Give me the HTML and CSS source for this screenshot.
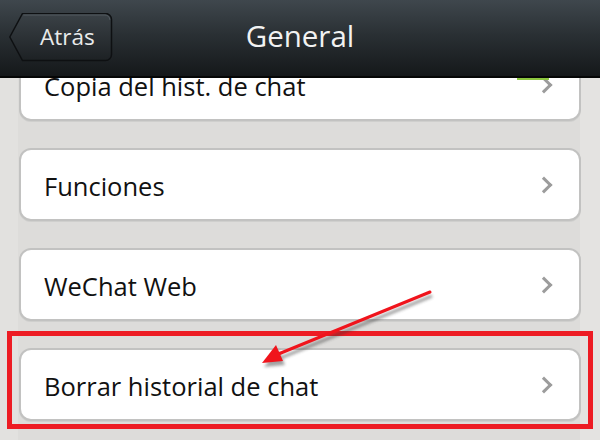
FILE: index.html
```html
<!DOCTYPE html>
<html lang="es">
<head>
<meta charset="utf-8">
<title>General</title>
<link rel="stylesheet" href="styles.css">
</head>
<body>
<div class="screen">
  <header class="topbar">
    <div class="back">
      <svg class="back-shape" width="104" height="49" viewBox="0 0 104 49">
        <defs>
          <linearGradient id="bg" x1="0" y1="0" x2="0" y2="1">
            <stop offset="0" stop-color="#3b4247"/>
            <stop offset="1" stop-color="#1d2124"/>
          </linearGradient>
        </defs>
        <path d="M13.5,0.5 H96.5 a6,6 0 0 1 6,6 V41.5 a6,6 0 0 1 -6,6 H13.5 L0.8,24 Z" fill="url(#bg)" stroke="#0e1012" stroke-width="1.5"/>
        <path d="M14.3,2 H96 a4.8,4.8 0 0 1 4.8,4.8" fill="none" stroke="#535b61" stroke-width="1"/>
      </svg>
      <span class="back-label">Atrás</span>
    </div>
    <h1 class="title">General</h1>
  </header>
  <main class="list">
    <div class="card"><span class="label">Copia del hist. de chat</span><span class="chev"></span><span class="peek"></span></div>
    <div class="card"><span class="label">Funciones</span><span class="chev"></span></div>
    <div class="card"><span class="label">WeChat Web</span><span class="chev"></span></div>
    <div class="card"><span class="label">Borrar historial de chat</span><span class="chev"></span></div>
  </main>
  <div class="highlight"></div>
  <svg class="arrow" width="600" height="440" viewBox="0 0 600 440">
    <defs>
      <filter id="sh" x="-20%" y="-20%" width="140%" height="160%">
        <feGaussianBlur stdDeviation="1.6"/>
      </filter>
    </defs>
    <g transform="translate(2,4)" opacity="0.45" filter="url(#sh)">
      <line x1="430" y1="292" x2="276" y2="355" stroke="#333" stroke-width="3"/>
      <polygon points="262,363 276,345 283,361" fill="#333"/>
    </g>
    <line x1="430" y1="292" x2="276" y2="355" stroke="#f0141c" stroke-width="3" stroke-linecap="round"/>
    <polygon points="262,363 276,345 283,361" fill="#f0141c"/>
  </svg>
</div>
</body>
</html>
```
FILE: styles.css
```css
html, body {
  margin: 0;
  padding: 0;
}
body {
  width: 600px;
  height: 440px;
  overflow: hidden;
  background: #dfdedc;
  font-family: "Open Sans", "Noto Sans", "Liberation Sans", sans-serif;
}
.screen {
  position: relative;
  width: 600px;
  height: 440px;
  overflow: hidden;
  background: linear-gradient(to right, #e2e1df 0, #e2e1df 18px, #dddcda 18px, #dddcda 580px, #e4e3e1 580px);
}
.topbar {
  position: relative;
  z-index: 2;
  height: 76px;
  border-bottom: 2px solid #050606;
  background: linear-gradient(to bottom, #3f474d 0%, #2a3034 45%, #15181a 100%);
  display: flex;
  align-items: center;
  box-sizing: content-box;
}
.back {
  position: relative;
  width: 104px;
  height: 49px;
  margin-left: 9px;
  margin-top: -1px;
  flex: none;
}
.back-shape {
  position: absolute;
  left: 0;
  top: 0;
}
.back-label {
  position: relative;
  display: block;
  padding-left: 31px;
  line-height: 47px;
  font-size: 22.5px;
  color: #e9eaea;
}
.title {
  margin: 0;
  position: absolute;
  left: 0;
  right: 0;
  top: 0;
  height: 72px;
  line-height: 72px;
  text-align: center;
  font-weight: normal;
  font-size: 29.5px;
  color: #f2f2f2;
  pointer-events: none;
}
.list {
  display: flex;
  flex-direction: column;
  gap: 27px;
  margin-top: -30px;
  padding: 0 19px;
}
.card {
  position: relative;
  height: 73px;
  box-sizing: border-box;
  background: #ffffff;
  border: 2px solid #c2c2c1;
  border-radius: 12px;
  box-shadow: 0 1px 0 #cfcfcd;
  display: flex;
  align-items: center;
  padding-left: 23px;
  padding-right: 26px;
}
.label {
  flex: 1;
  font-size: 25.5px;
  line-height: 30px;
  color: #111111;
  margin-top: 2px;
}
.chev {
  width: 9px;
  height: 9px;
  border-top: 3px solid #9c9c9c;
  border-right: 3px solid #9c9c9c;
  transform: rotate(45deg);
  margin-right: 3px;
}
.peek {
  position: absolute;
  right: 30px;
  top: 28px;
  width: 32px;
  height: 2px;
  background: #8cc63f;
}
.highlight {
  position: absolute;
  left: 7px;
  top: 331px;
  width: 586px;
  height: 98px;
  box-sizing: border-box;
  border: 5px solid #ed1c24;
  z-index: 3;
}
.arrow {
  position: absolute;
  left: 0;
  top: 0;
  z-index: 4;
}
```
